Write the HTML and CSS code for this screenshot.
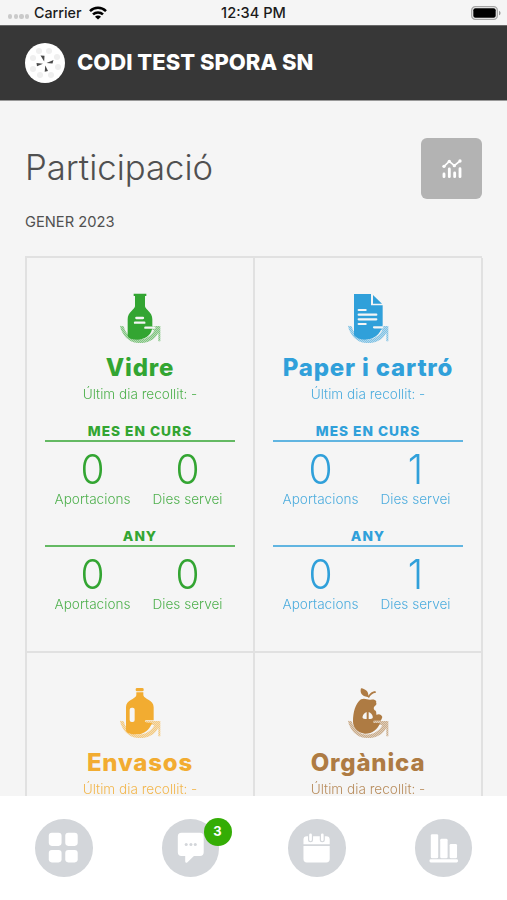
FILE: index.html
```html
<!DOCTYPE html>
<html lang="ca">
<head>
<meta charset="utf-8">
<meta name="viewport" content="width=device-width, initial-scale=1">
<title>Participació</title>
<link rel="stylesheet" href="styles.css">
</head>
<body>
<svg class="defs" width="0" height="0" aria-hidden="true">
  <defs>
    <pattern id="weave" width="6" height="6" patternUnits="userSpaceOnUse">
      <rect width="6" height="6" fill="#555"/>
      <path d="M0 0h3v3h3v3H3V3H0z" fill="#999"/>
    </pattern>
    <mask id="weave-mask" maskUnits="userSpaceOnUse" x="0" y="0" width="240" height="210">
      <rect width="240" height="210" fill="url(#weave)"/>
    </mask>
    <symbol id="swoosh" viewBox="0 0 240 210">
      <path d="M60 137L71 139C76 158 88 172 104 177C130 184 153 170 163 151L134 145L136 138L181 138V184L175 184V158C164 181 139 191 113 189C87 187 65 165 60 137Z" fill="currentColor" mask="url(#weave-mask)"/>
    </symbol>
  </defs>
</svg>
<div class="app">
  <div class="status">
    <div class="status-left">
      <span class="signal"><i></i><i></i><i></i><i></i></span>
      <span>Carrier</span>
      <svg class="wifi" viewBox="0 0 18 14"><g fill="none" stroke="#000" stroke-width="2.5"><path d="M1 5.1a11.4 11.4 0 0 1 16 0"/><path d="M4 8.4a7.2 7.2 0 0 1 10 0"/></g><path d="M9 13.6L6 10.7a4.2 4.2 0 0 1 6 0z"/></svg>
    </div>
    <div class="status-time">12:34 PM</div>
    <div class="status-right">
      <svg class="battery" viewBox="0 0 30 14"><rect x=".7" y=".7" width="25.6" height="12.6" rx="3.6" fill="none" stroke="#a5a5a5" stroke-width="1.3"/><rect x="2.3" y="2.3" width="22.4" height="9.4" rx="2" fill="#000"/><path d="M28 4.7c2 .8 2 3.8 0 4.6z" fill="#999"/></svg>
    </div>
  </div>
  <header class="header">
    <svg class="logo" viewBox="0 0 40 40">
      <circle cx="20" cy="20" r="20" fill="#fff"/>
      <g fill="#efefef"><circle cx="14" cy="8" r="3"/><circle cx="24" cy="8" r="3"/><circle cx="32" cy="14" r="3"/><circle cx="33" cy="24" r="3"/><circle cx="26" cy="32" r="3"/><circle cx="15" cy="32" r="3"/><circle cx="8" cy="26" r="3"/><circle cx="8" cy="15" r="3"/></g>
      <g fill="#4a4a4a"><path d="M15.500 12.500l4 .3-.3 5.700z"/><path d="M28.500 17L27.500 20.500l-6-.4z"/><path d="M20.300 22.500l2.700 5.500-3.300.8z"/><path d="M11.500 20l6.500.8-6 2.500z"/></g>
    </svg>
    <div class="header-title">CODI TEST SPORA SN</div>
  </header>
  <main class="content">
    <div class="heading">
      <h1>Participació</h1>
      <button class="chart-btn" aria-label="Estadístiques">
        <svg viewBox="0 0 60 60"><g fill="none" stroke="#fff" stroke-width="8.500" stroke-linecap="round"><path d="M6 45v8M22 30v23M38 42v11M54 29v24"/><path d="M6 22L22 7L37 20L54 6" stroke-width="5" stroke-linejoin="round"/></g><g fill="#fff"><circle cx="6" cy="22" r="5"/><circle cx="22" cy="7" r="5"/><circle cx="37" cy="20" r="5"/><circle cx="54" cy="6" r="5"/></g></svg>
      </button>
    </div>
    <div class="month">GENER 2023</div>
    <div class="grid">
      <section class="card glass">
        <svg class="waste" viewBox="0 0 240 210">
          <use href="#swoosh"/>
          <path d="M101 41h38v7h-4v31c0 9 22 17 22 39v20c0 24-17 39-42 41-17 1-32-3-32-13v-48c0-22 22-30 22-39V48h-4z" fill="currentColor"/>
          <path d="M109 114h20M105 128h28M136 143h27" stroke="#f5f5f5" stroke-width="7" stroke-linecap="round"/>
        </svg>
        <h2>Vidre</h2>
        <p class="last">Últim dia recollit: -</p>
        <div class="period">MES EN CURS</div>
        <div class="stats"><div><b>0</b><span>Aportacions</span></div><div><b>0</b><span>Dies servei</span></div></div>
        <div class="period">ANY</div>
        <div class="stats"><div><b>0</b><span>Aportacions</span></div><div><b>0</b><span>Dies servei</span></div></div>
      </section>
      <section class="card paper">
        <svg class="waste" viewBox="0 0 240 210">
          <use href="#swoosh"/>
          <path d="M79 42H129V76H164V136C157 164 137 179 111 179C96 179 85 174 78 166V43Z" fill="currentColor"/>
          <path d="M135 45L162 71H135Z" fill="currentColor"/>
          <path d="M92 90h21M92 104h53M92 118h53M92 132h21M138 142h25" stroke="#f5f5f5" stroke-width="6.500" stroke-linecap="round"/>
        </svg>
        <h2>Paper i cartró</h2>
        <p class="last">Últim dia recollit: -</p>
        <div class="period">MES EN CURS</div>
        <div class="stats"><div><b>0</b><span>Aportacions</span></div><div><b>1</b><span>Dies servei</span></div></div>
        <div class="period">ANY</div>
        <div class="stats"><div><b>0</b><span>Aportacions</span></div><div><b>1</b><span>Dies servei</span></div></div>
      </section>
      <section class="card plastic">
        <svg class="waste" viewBox="0 0 240 210">
          <use href="#swoosh"/>
          <rect x="107" y="39" width="24" height="10" rx="4" fill="currentColor"/>
          <path d="M109 52h21v9c3 13 31 13 31 36v39h-24c-6 4-1 8 19 8-8 21-24 34-44 34-20 0-34-4-34-14V97c0-23 28-23 31-36z" fill="currentColor"/>
          <rect x="89" y="98" width="15" height="43" rx="6" fill="#f5f5f5"/>
        </svg>
        <h2>Envasos</h2>
        <p class="last">Últim dia recollit: -</p>
      </section>
      <section class="card organic">
        <svg class="waste" viewBox="0 0 240 210">
          <use href="#swoosh"/>
          <path d="M119 66C101 65 95 52 99 40C114 42 122 51 121 62C127 53 134 49 142 48L144 53C134 54 127 60 123 69Z" fill="currentColor"/>
          <path d="M99 73C112 68 118 76 129 74C136 72 141 74 145 78C142 82 148 86 144 90C137 94 135 101 140 106C145 107 145 112 145 119C154 116 159 117 163 126C162 130 160 134 158 137H137L135 144H156C148 165 132 177 110 176C88 173 75 159 75 139C75 113 82 86 99 73Z" fill="currentColor"/>
          <path d="M116 111V132C106 133 102 131 104 124C105 118 110 113 116 111ZM122 111V132C132 133 136 131 134 124C133 118 128 113 122 111Z" fill="#f5f5f5"/>
        </svg>
        <h2>Orgànica</h2>
        <p class="last">Últim dia recollit: -</p>
      </section>
    </div>
  </main>
  <nav class="tabs">
    <a class="tab"><svg viewBox="0 0 171 171"><g fill="#fff"><rect x="41" y="41" width="38" height="39" rx="9"/><rect x="90" y="41" width="37" height="39" rx="9"/><rect x="41" y="92" width="38" height="37" rx="9"/><rect x="90" y="92" width="37" height="37" rx="9"/></g></svg></a>
    <a class="tab"><svg viewBox="0 0 171 171"><path d="M58 41h55q11 0 11 11v47q0 11-11 11H95L75 129q-6 4-6-3v-16H58q-11 0-11-11V52q0-11 11-11z" fill="#fff"/><g fill="#d3d6da"><circle cx="72" cy="76" r="4.500"/><circle cx="86" cy="76" r="4.500"/><circle cx="99" cy="76" r="4.500"/></g></svg><span class="badge">3</span></a>
    <a class="tab"><svg viewBox="0 0 171 171"><path d="M46 75V61q0-10 10-10h58q10 0 10 10v14zM46 80h78v39q0 10-10 10H56q-10 0-10-10z" fill="#fff"/><g fill="none" stroke-linecap="round"><path d="M67 48v14M102 48v14" stroke="#d3d6da" stroke-width="15"/><path d="M67 47v15M102 47v15" stroke="#fff" stroke-width="8"/></g></svg></a>
    <a class="tab"><svg viewBox="0 0 171 171"><g fill="#fff"><rect x="47" y="45" width="22" height="72" rx="4"/><rect x="75" y="59" width="22" height="58" rx="4"/><rect x="103" y="74" width="22" height="43" rx="4"/><rect x="43" y="120" width="85" height="9" rx="4"/></g></svg></a>
  </nav>
</div>
</body>
</html>
```
FILE: styles.css
```css
* { box-sizing: border-box; }
body {
  margin: 0;
  font-family: Inter, "Liberation Sans", sans-serif;
  background: #f5f5f5;
  color: #505050;
}
.defs { display: block; }
.app { height: 900px; display: flex; flex-direction: column; overflow: hidden; }
.status {
  flex: none;
  height: 25px;
  padding: 0 6px 0 8px;
  display: grid;
  grid-template-columns: 1fr auto 1fr;
  align-items: center;
  font-size: 14.300px;
  font-weight: 500;
  color: #1b1b1b;
}
.status-left { display: flex; align-items: center; }
.status-time { font-size: 14.600px; margin-right: 2px; }
.signal { display: flex; gap: 1.300px; margin: 8px 4.500px 0 0; }
.signal i { width: 4.400px; height: 4.400px; border-radius: 50%; background: #cacaca; }
.wifi { width: 18px; height: 14px; margin-left: 7px; }
.status-right { display: flex; justify-content: flex-end; }
.battery { width: 30px; height: 14px; }
.header {
  flex: none;
  height: 76px;
  padding: 0 25px;
  display: flex;
  align-items: center;
  gap: 12px;
  background: #373737;
  border-top: 1px solid #686868;
  border-bottom: 1px solid #999;
}
.logo { width: 40px; height: 40px; }
.header-title { color: #fff; font-size: 22px; font-weight: 800; line-height: 30px; margin-bottom: 2px; }
.content { flex: 1; min-height: 0; overflow: hidden; padding: 37px 25px 0; }
.heading { display: flex; justify-content: space-between; align-items: center; height: 61px; }
h1 { margin: 0 0 4px; font-size: 34.700px; font-weight: 300; line-height: 44px; }
.chart-btn {
  width: 61px;
  height: 61px;
  padding: 0;
  border: 0;
  border-radius: 6px;
  background: #b3b3b3;
  display: grid;
  place-items: center;
}
.chart-btn svg { width: 20px; height: 20px; display: block; }
.month { margin-top: 12px; height: 22px; line-height: 22px; font-size: 14.700px; }
.grid {
  margin-top: 23px;
  display: grid;
  grid-template-columns: 228px 228px;
  border-top: 2px solid #e1e1e1;
  border-left: 2px solid #e1e1e1;
}
.card {
  height: 394.500px;
  padding: 22px 18px 0;
  display: flex;
  flex-direction: column;
  border-right: 2px solid #e1e1e1;
  border-bottom: 2px solid #e1e1e1;
  text-align: center;
}
.glass { color: #33a532; }
.paper { color: #30a0da; }
.plastic { color: #f2ac31; }
.organic { color: #ae7b43; }
.waste { width: 80px; height: 70px; flex: none; align-self: center; }
h2 { margin: 1px 0 0; font-size: 24px; line-height: 34px; font-weight: 800; letter-spacing: .82px; white-space: nowrap; }
.last { margin: 0 0 17px; font-size: 13.600px; line-height: 19px; font-weight: 300; opacity: .85; }
.period {
  height: 21px;
  line-height: 20px;
  border-bottom: 2px solid color-mix(in srgb, currentColor 75%, #f5f5f5);
  font-size: 13.700px;
  font-weight: 800;
  letter-spacing: 1px;
}
.stats { display: grid; grid-template-columns: 1fr 1fr; padding-top: 4px; height: 84px; }
.stats b { display: block; font-size: 41px; line-height: 46px; font-weight: 300; transform: scaleX(.95); }
.stats span { display: block; font-size: 13.600px; line-height: 15px; font-weight: 300; opacity: .85; }
.tabs {
  flex: none;
  height: 104px;
  padding: 23px 35px 0;
  display: flex;
  justify-content: space-between;
  background: #fff;
}
.tab { position: relative; width: 57.500px; height: 57.500px; border-radius: 50%; background: #d3d6da; }
.tab > svg { display: block; width: 100%; height: 100%; }
.badge {
  position: absolute;
  top: -1px;
  right: -12.500px;
  width: 28px;
  height: 28px;
  border-radius: 50%;
  background: #34ad05;
  color: #fff;
  font-size: 13px;
  font-weight: 700;
  line-height: 27px;
  text-align: center;
}
```
